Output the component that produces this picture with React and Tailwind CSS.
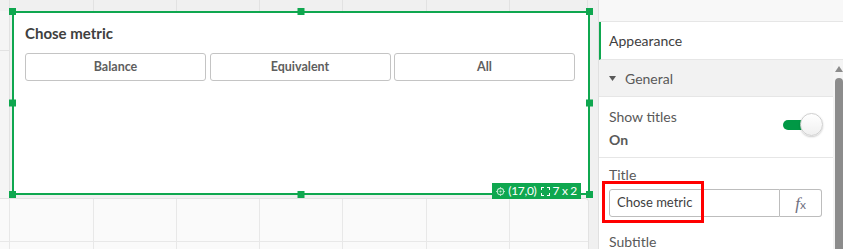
export default function App() {
  const green = "border-[#0fa74f]";
  return (
    <div className="flex w-[843px] h-[249px] overflow-hidden bg-[#f0f0f0] [font-family:Lato,'Noto_Sans',sans-serif]">
      {/* Left canvas */}
      <div className="flex w-[598px] shrink-0 flex-col">
        {/* top strip with grid lines */}
        <div className="flex h-[11px] shrink-0">
          <div className="w-[10px] border-r border-[#e2e2e2]" />
          <div className="w-[84px] border-r border-[#e2e2e2]" />
          <div className="w-[83px] border-r border-[#e2e2e2]" />
          <div className="w-[83px] border-r border-[#e2e2e2]" />
          <div className="w-[83px] border-r border-[#e2e2e2]" />
          <div className="w-[84px] border-r border-[#e2e2e2]" />
          <div className="w-[83px] border-r border-[#e2e2e2]" />
          <div className="w-[78px] border-r border-[#e2e2e2]" />
        </div>
        {/* row with object */}
        <div className="flex h-[187px] shrink-0">
          <div className="w-[12px] shrink-0">
            <div className="h-full w-[10px] border-r border-[#e2e2e2] bg-[#f5f5f5]">
              <div className="h-[40px] border-b border-[#e2e2e2]" />
            </div>
          </div>
          <div className={`relative h-[184px] w-[578px] shrink-0 border-2 ${green} bg-white pl-[11px] pr-[13px] pt-[10px]`}>
            <div className="text-[15px] font-bold leading-[20px] text-[#404040]">Chose metric</div>
            <div className="mt-[10px] grid grid-cols-3 gap-[3.5px]">
              {["Balance", "Equivalent", "All"].map((b) => (
                <div
                  key={b}
                  className="flex h-[28px] items-center justify-center rounded-[3px] border border-[#c4c4c4] bg-white text-[12.5px] font-bold text-[#5e5e5e]"
                >
                  {b}
                </div>
              ))}
            </div>
            {/* handles */}
            <div className="absolute -left-[5px] -top-[5px] h-[7px] w-[7px] bg-[#0fa74f]" />
            <div className="absolute left-1/2 -top-[5px] h-[7px] w-[7px] -translate-x-1/2 bg-[#0fa74f]" />
            <div className="absolute -right-[5px] -top-[5px] h-[7px] w-[7px] bg-[#0fa74f]" />
            <div className="absolute -left-[5px] top-1/2 h-[7px] w-[7px] -translate-y-1/2 bg-[#0fa74f]" />
            <div className="absolute -right-[5px] top-1/2 h-[7px] w-[7px] -translate-y-1/2 bg-[#0fa74f]" />
            <div className="absolute -left-[5px] -bottom-[5px] h-[7px] w-[7px] bg-[#0fa74f]" />
            <div className="absolute left-1/2 -bottom-[5px] h-[7px] w-[7px] -translate-x-1/2 bg-[#0fa74f]" />
            <div className="absolute -right-[5px] -bottom-[5px] h-[7px] w-[7px] bg-[#0fa74f]" />
            {/* badge */}
            <div className="absolute right-[7px] -bottom-[6px] flex h-[16px] items-center bg-[#0fa74f] pl-[4px] pr-[4px] text-[12px] leading-none text-white">
              <svg width="9" height="9" viewBox="0 0 10 10" className="opacity-70">
                <circle cx="5" cy="5" r="3.5" fill="none" stroke="white" strokeWidth="1.2" />
                <circle cx="5" cy="5" r="1.2" fill="white" />
                <path d="M5 0v2.5M5 7.5V10M0 5h2.5M7.5 5H10" stroke="white" strokeWidth="1" />
              </svg>
              <span className="ml-[3px] tracking-[-0.3px]">(17,0)</span>
              <span className="ml-[5px] h-[9px] w-[9px] border border-dashed border-white" />
              <span className="ml-[2px] tracking-[-0.3px]">7 x 2</span>
            </div>
          </div>
        </div>
        {/* lower grid panel */}
        <div className="flex flex-1 w-[589px] rounded-tr-[4px] border-r border-t border-[#e2e2e2] bg-[#fafafa]">
          <div className="w-[10px] border-r border-[#e8e8e8]"><div className="h-[43px] border-b border-[#e8e8e8]" /></div>
          <div className="w-[84px] border-r border-[#e8e8e8]"><div className="h-[43px] border-b border-[#e8e8e8]" /></div>
          <div className="w-[83px] border-r border-[#e8e8e8]"><div className="h-[43px] border-b border-[#e8e8e8]" /></div>
          <div className="w-[83px] border-r border-[#e8e8e8]"><div className="h-[43px] border-b border-[#e8e8e8]" /></div>
          <div className="w-[83px] border-r border-[#e8e8e8]"><div className="h-[43px] border-b border-[#e8e8e8]" /></div>
          <div className="w-[84px] border-r border-[#e8e8e8]"><div className="h-[43px] border-b border-[#e8e8e8]" /></div>
          <div className="w-[83px] border-r border-[#e8e8e8]"><div className="h-[43px] border-b border-[#e8e8e8]" /></div>
          <div className="flex-1"><div className="h-[43px] border-b border-[#e8e8e8]" /></div>
        </div>
      </div>

      {/* Right properties panel */}
      <div className="flex w-[245px] shrink-0 flex-col border-l border-[#e0e0e0] bg-white">
        <div className="h-[22px] shrink-0 border-b border-[#e6e6e6] bg-[#f8f8f8]" />
        <div className="flex h-[38px] shrink-0 items-center border-b border-l-2 border-b-[#e6e6e6] border-l-[#0fa74f] pl-[8px] text-[14px] text-[#404040]">
          Appearance
        </div>
        <div className="flex min-h-0 flex-1">
          <div className="flex w-[234px] flex-col">
            <div className="flex h-[37px] shrink-0 items-center border-b border-[#e6e6e6] bg-[#f2f2f2] pl-[10px] text-[14px] text-[#595959]">
              <svg width="7" height="5" viewBox="0 0 7 5">
                <path d="M0 0h7L3.5 5z" fill="#595959" />
              </svg>
              <span className="ml-[9px]">General</span>
            </div>
            <div className="flex h-[61px] shrink-0 justify-between border-b border-[#e6e6e6] pl-[10px] pt-[10px]">
              <div className="text-[14px] leading-[20px]">
                <div className="text-[#595959]">Show titles</div>
                <div className="mt-[3px] font-bold text-[#595959]">On</div>
              </div>
              <div className="relative mr-[10px] mt-[6px] h-[23px] w-[40px]">
                <div className="absolute left-0 top-[7px] h-[10px] w-[30px] rounded-full bg-[#009845]" />
                <div className="absolute right-0 top-0 h-[23px] w-[23px] rounded-full border border-[#cfcfcf] bg-gradient-to-b from-white to-[#f0f0f0] shadow-[0_1px_2px_rgba(0,0,0,0.2)]" />
              </div>
            </div>
            <div className="pl-[10px] pt-[7px]">
              <div className="text-[14px] leading-[20px] text-[#595959]">Title</div>
              <div className="relative mt-[4px] flex h-[28px] w-[213px]">
                <div className="flex w-[171px] items-center rounded-l-[3px] border border-[#bdbdbd] pl-[7px] text-[13px] text-[#404040]">
                  Chose metric
                </div>
                <div className="flex flex-1 items-center justify-center rounded-r-[3px] border border-l-0 border-[#bdbdbd]">
                  <span className="font-['Liberation_Serif',serif] text-[17px] italic leading-none text-[#6f6f80]">f</span>
                  <span className="mt-[3px] text-[12px] leading-none text-[#6f6f80]">x</span>
                </div>
                <div className="pointer-events-none absolute -left-[7px] -top-[8px] h-[42px] w-[102px] border-[3px] border-[#ff0000]" />
              </div>
              <div className="mt-[15px] text-[14px] leading-[20px] text-[#595959]">Subtitle</div>
            </div>
          </div>
          <div className="flex w-[10px] flex-col items-end bg-[#f4f4f4]">
            <svg width="8" height="6" viewBox="0 0 8 6" className="mt-[6px]">
              <path d="M0 6h8L4 0z" fill="#8c8c8c" />
            </svg>
            <div className="mt-[6px] w-[8px] flex-1 rounded-t-[4px] bg-[#8c8c8c]" />
          </div>
        </div>
      </div>
    </div>
  );
}
